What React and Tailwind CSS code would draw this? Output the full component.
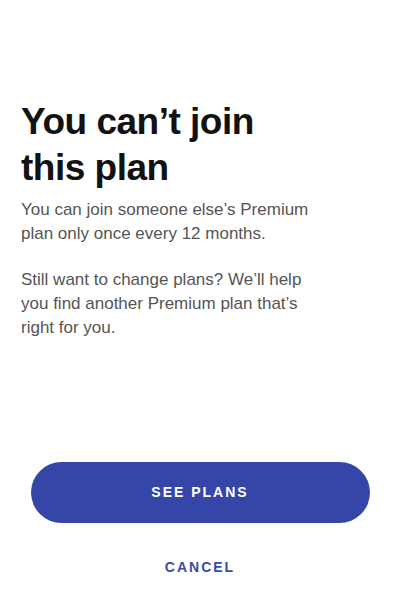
import React from 'react';

const App = () => {
  return (
    <div className="w-[400px] h-[604px] bg-white font-['Liberation_Sans',Arial,sans-serif] flex flex-col pt-[99px]">
      {/* Copy */}
      <div className="px-[21px]">
        <h1 className="text-[37px] leading-[46px] font-bold tracking-[-0.5px] text-[#121212]">
          You can’t join
          <br />
          this plan
        </h1>
        <p className="mt-[7px] text-[17px] leading-[24px] text-[#555555]">
          You can join someone else’s Premium
          <br />
          plan only once every 12 months.
        </p>
        <p className="mt-[22px] text-[17px] leading-[24px] text-[#555555]">
          Still want to change plans? We’ll help
          <br />
          you find another Premium plan that’s
          <br />
          right for you.
        </p>
      </div>

      {/* Actions */}
      <div className="mt-[122px] flex flex-col items-center">
        <button className="w-[339px] h-[61px] rounded-full bg-[#3646a8] text-white text-[14px] font-bold tracking-[2px]">
          SEE PLANS
        </button>
        <button className="mt-[34px] text-[14px] leading-[20px] font-bold tracking-[2px] text-[#3a4aa8]">
          CANCEL
        </button>
      </div>
    </div>
  );
};

export default App;
